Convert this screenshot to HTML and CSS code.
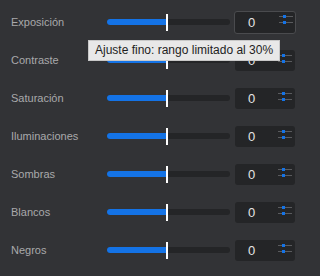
FILE: index.html
```html
<!DOCTYPE html>
<html>
<head>
<meta charset="utf-8">
<link rel="stylesheet" href="styles.css">
</head>
<body>
<div class="panel">
  <div class="row">
    <span class="label">Exposición</span>
    <div class="slider"><div class="fill"></div><div class="thumb"></div></div>
    <div class="num focused"><span class="val">0</span><span class="step"><i></i><i></i></span></div>
  </div>
  <div class="row">
    <span class="label">Contraste</span>
    <div class="slider"><div class="fill"></div><div class="thumb"></div></div>
    <div class="num"><span class="val">0</span><span class="step"><i></i><i></i></span></div>
  </div>
  <div class="row">
    <span class="label">Saturación</span>
    <div class="slider"><div class="fill"></div><div class="thumb"></div></div>
    <div class="num"><span class="val">0</span><span class="step"><i></i><i></i></span></div>
  </div>
  <div class="row">
    <span class="label">Iluminaciones</span>
    <div class="slider"><div class="fill"></div><div class="thumb"></div></div>
    <div class="num"><span class="val">0</span><span class="step"><i></i><i></i></span></div>
  </div>
  <div class="row">
    <span class="label">Sombras</span>
    <div class="slider"><div class="fill"></div><div class="thumb"></div></div>
    <div class="num"><span class="val">0</span><span class="step"><i></i><i></i></span></div>
  </div>
  <div class="row">
    <span class="label">Blancos</span>
    <div class="slider"><div class="fill"></div><div class="thumb"></div></div>
    <div class="num"><span class="val">0</span><span class="step"><i></i><i></i></span></div>
  </div>
  <div class="row">
    <span class="label">Negros</span>
    <div class="slider"><div class="fill"></div><div class="thumb"></div></div>
    <div class="num"><span class="val">0</span><span class="step"><i></i><i></i></span></div>
  </div>
  <div class="tooltip">Ajuste fino: rango limitado al 30%</div>
</div>
</body>
</html>
```
FILE: styles.css
```css
html, body {
  margin: 0;
  padding: 0;
  background: #323336;
  width: 320px;
  height: 276px;
  overflow: hidden;
}
.panel {
  position: relative;
  padding-top: 3px;
  font-family: "Liberation Sans", Arial, sans-serif;
}
.row {
  display: flex;
  align-items: center;
  height: 38px;
  padding-left: 11px;
}
.label {
  width: 96px;
  font-size: 11px;
  color: #a9a9ab;
}
.slider {
  position: relative;
  width: 123px;
  height: 6px;
  border-radius: 3px;
  background: #242527;
}
.fill {
  width: 61px;
  height: 6px;
  border-radius: 3px 0 0 3px;
  background: #1473e6;
}
.thumb {
  position: absolute;
  left: 59px;
  top: -5px;
  width: 2px;
  height: 17px;
  background: #ffffff;
}
.num {
  margin-left: 5px;
  width: 60px;
  height: 21px;
  box-sizing: border-box;
  border-radius: 3px;
  background: #242527;
  display: flex;
  align-items: center;
  position: relative;
}
.num.focused {
  border: 1px solid #4a4b4e;
  height: 23px;
  margin-left: 4px;
  width: 62px;
}
.val {
  position: absolute;
  left: 13px;
  font-size: 13px;
  color: #e4e4e4;
}
.step {
  position: absolute;
  right: 3px;
  top: 5px;
  display: flex;
  flex-direction: column;
  gap: 5px;
}
.num.focused .step { top: 4px; right: 2px; }
.step i {
  display: block;
  width: 14px;
  height: 1px;
  background: #5a5b5e;
  position: relative;
}
.step i::after {
  content: "";
  position: absolute;
  left: 4px;
  top: -1px;
  width: 3px;
  height: 3px;
  background: #1473e6;
}
.tooltip {
  position: absolute;
  left: 88px;
  top: 40px;
  height: 21px;
  box-sizing: border-box;
  padding: 0 6px;
  background: #e8e8e8;
  border: 1px solid #c8c8c8;
  color: #1e1e1e;
  font-size: 12px;
  line-height: 19px;
  white-space: nowrap;
}
```
